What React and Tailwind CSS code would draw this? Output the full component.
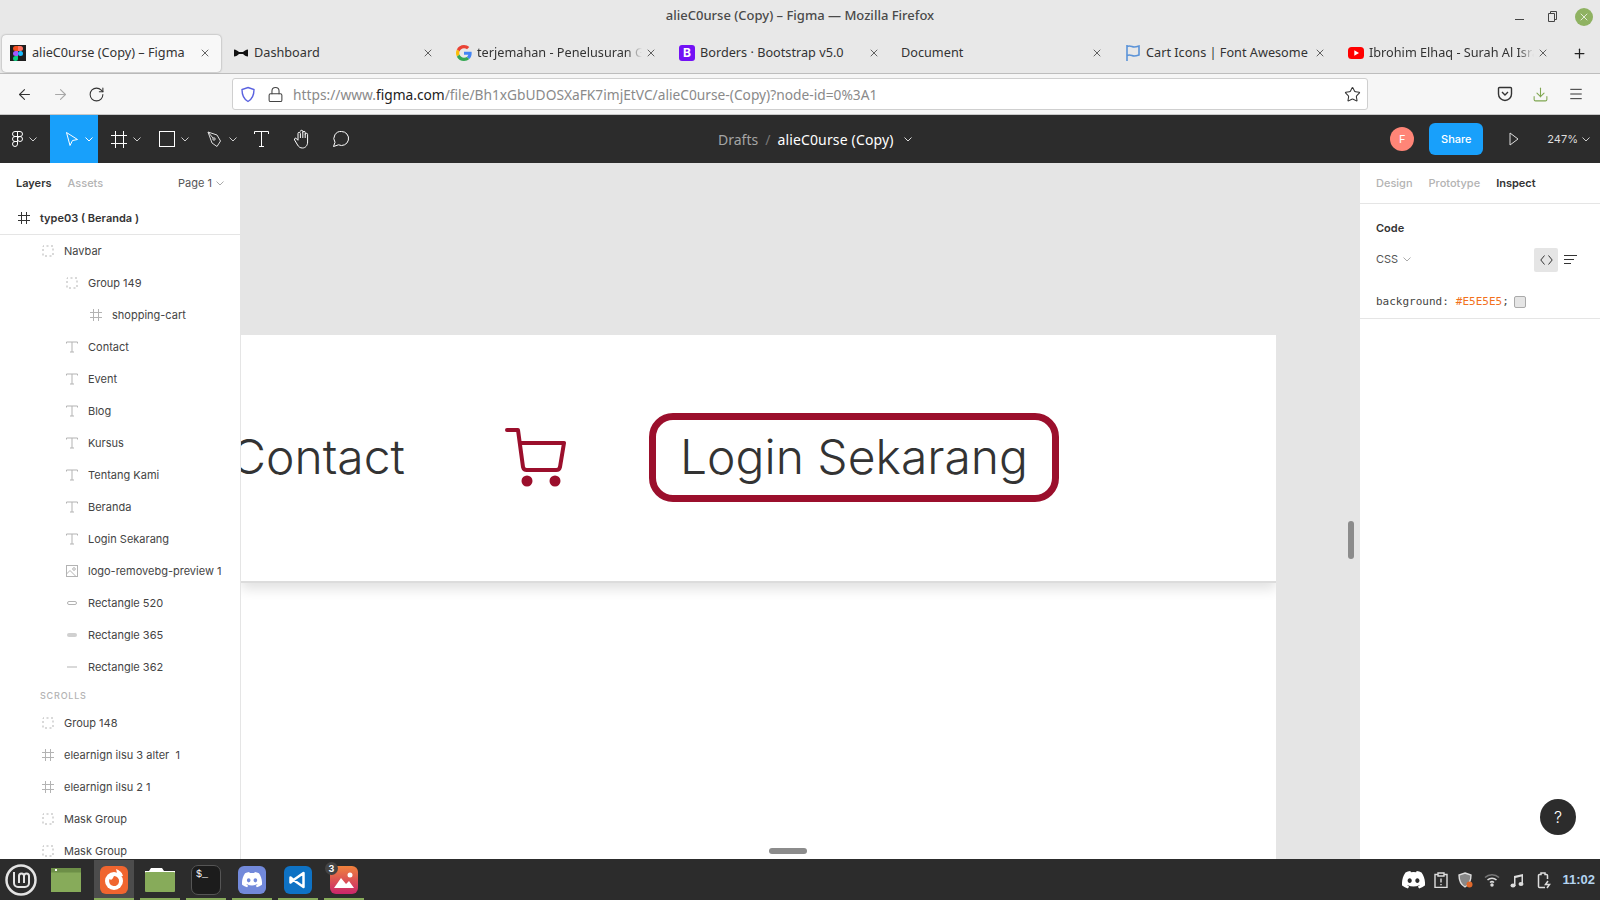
import React from "react";
import { ArrowLeft, ArrowRight, RotateCw, Star, X, Plus, Menu, Lock, Download } from "lucide-react";

const tabs = [
  { title: "Dashboard", icon: "bow" },
  { title: "terjemahan - Penelusuran Google", icon: "google", fade: true },
  { title: "Borders · Bootstrap v5.0", icon: "bootstrap" },
  { title: "Document", icon: null },
  { title: "Cart Icons | Font Awesome", icon: "flag" },
  { title: "Ibrohim Elhaq - Surah Al Israa", icon: "youtube", fade: true },
];

const layers = [
  { name: "Navbar", depth: 1, icon: "group" },
  { name: "Group 149", depth: 2, icon: "group" },
  { name: "shopping-cart", depth: 3, icon: "frame" },
  { name: "Contact", depth: 2, icon: "text" },
  { name: "Event", depth: 2, icon: "text" },
  { name: "Blog", depth: 2, icon: "text" },
  { name: "Kursus", depth: 2, icon: "text" },
  { name: "Tentang Kami", depth: 2, icon: "text" },
  { name: "Beranda", depth: 2, icon: "text" },
  { name: "Login Sekarang", depth: 2, icon: "text" },
  { name: "logo-removebg-preview 1", depth: 2, icon: "image" },
  { name: "Rectangle 520", depth: 2, icon: "pill" },
  { name: "Rectangle 365", depth: 2, icon: "pillFill" },
  { name: "Rectangle 362", depth: 2, icon: "line" },
];

const scrollLayers = [
  { name: "Group 148", depth: 1, icon: "group" },
  { name: "elearnign ilsu 3 alter  1", depth: 1, icon: "frame" },
  { name: "elearnign ilsu 2 1", depth: 1, icon: "frame" },
  { name: "Mask Group", depth: 1, icon: "group" },
  { name: "Mask Group", depth: 1, icon: "group" },
];

const Favicon = ({ type }) => {
  if (type === "bow")
    return (
      <svg width="16" height="16" viewBox="0 0 16 16">
        <path d="M1 4.5c2 0 4 1.5 5 2.5h4c1-1 3-2.5 5-2.5v7c-2 0-4-1.5-5-2.5H6c-1 1-3 2.5-5 2.5z" fill="#111" />
      </svg>
    );
  if (type === "google")
    return (
      <svg width="16" height="16" viewBox="0 0 48 48">
        <path fill="#EA4335" d="M24 9.5c3.5 0 6.7 1.3 9.1 3.5l6.8-6.8C35.8 2.4 30.3 0 24 0 14.6 0 6.5 5.4 2.6 13.2l7.9 6.1C12.4 13.6 17.7 9.5 24 9.5z" />
        <path fill="#4285F4" d="M47 24.5c0-1.6-.1-3.1-.4-4.5H24v9h12.9c-.6 3-2.2 5.4-4.7 7.1l7.6 5.9C44.3 37.8 47 31.7 47 24.5z" />
        <path fill="#FBBC05" d="M10.5 28.7c-.5-1.4-.8-3-.8-4.7s.3-3.2.8-4.7l-7.9-6.1C.9 16.5 0 20.1 0 24s.9 7.5 2.6 10.8z" />
        <path fill="#34A853" d="M24 48c6.5 0 11.9-2.1 15.8-5.8l-7.6-5.9c-2.1 1.4-4.9 2.3-8.2 2.3-6.3 0-11.6-4.1-13.5-9.8l-7.9 6.1C6.5 42.6 14.6 48 24 48z" />
      </svg>
    );
  if (type === "bootstrap")
    return (
      <span className="flex h-4 w-4 items-center justify-center rounded-[3px] bg-[#7311f5] text-[12px] font-bold leading-none text-white">B</span>
    );
  if (type === "flag")
    return (
      <svg width="16" height="18" viewBox="0 0 16 18" fill="none" stroke="#5b93d8" strokeWidth="1.6">
        <path d="M2 1v16" />
        <path d="M2 2.5c3-1.5 5 .5 7 .5 2 0 3.5-.5 5-1v9c-1.5.5-3 1-5 1-2 0-4-2-7-.5" />
      </svg>
    );
  if (type === "youtube")
    return (
      <svg width="16" height="16" viewBox="0 0 16 16">
        <rect x="0" y="2" width="16" height="12" rx="3.5" fill="#f00" />
        <path d="M6.3 5.3v5.4L11 8z" fill="#fff" />
      </svg>
    );
  return null;
};

const FigmaLogo = ({ color = false }) =>
  color ? (
    <svg width="10" height="15" viewBox="0 0 10 15">
      <circle cx="7.5" cy="7.5" r="2.5" fill="#1abcfe" />
      <path d="M2.5 10H5v2.5A2.5 2.5 0 1 1 2.5 10z" fill="#0acf83" />
      <path d="M2.5 5H5v5H2.5a2.5 2.5 0 0 1 0-5z" fill="#a259ff" />
      <path d="M2.5 0H5v5H2.5a2.5 2.5 0 0 1 0-5z" fill="#f24e1e" />
      <path d="M5 0h2.5a2.5 2.5 0 0 1 0 5H5z" fill="#ff7262" />
    </svg>
  ) : (
    <svg width="11" height="16" viewBox="0 0 11 16" fill="none" stroke="#fff" strokeWidth="1">
      <path d="M5.5 .5H3a2.5 2.5 0 0 0 0 5h2.5zM5.5 .5H8a2.5 2.5 0 0 1 0 5H5.5z" />
      <path d="M5.5 5.5H3a2.5 2.5 0 0 0 0 5h2.5z" />
      <circle cx="8" cy="8" r="2.5" />
      <path d="M3 10.5h2.5V13A2.5 2.5 0 1 1 3 10.5z" />
    </svg>
  );

const LayerIcon = ({ type, dark }) => {
  const c = dark ? "#333" : "#b3b3b3";
  if (type === "group")
    return (
      <svg width="12" height="12" viewBox="0 0 12 12" fill="none" stroke={c} strokeWidth="1" strokeDasharray="2 2.5" className="block">
        <rect x="1" y="1" width="10" height="10" strokeDashoffset="1" />
      </svg>
    );
  if (type === "frame")
    return (
      <svg width="14" height="14" viewBox="0 0 14 14" fill="none" stroke={c} strokeWidth="1" className="block">
        <path d="M4.5 1v12M9.5 1v12M1 4.5h12M1 9.5h12" />
      </svg>
    );
  if (type === "text")
    return (
      <svg width="12" height="12" viewBox="0 0 12 12" fill="none" stroke={c} strokeWidth="1" className="block">
        <path d="M.5 2.5V1h11v1.5M6 1v10M4 11h4" />
      </svg>
    );
  if (type === "image")
    return (
      <svg width="12" height="12" viewBox="0 0 12 12" fill="none" stroke={c} strokeWidth="1" className="block">
        <rect x=".5" y=".5" width="11" height="11" />
        <circle cx="8" cy="4" r="1.3" />
        <path d="M.5 9L4 5.5l6 6" />
      </svg>
    );
  if (type === "pill")
    return (
      <svg width="12" height="12" viewBox="0 0 12 12" fill="none" stroke={c} className="block">
        <rect x="1.5" y="4.5" width="9" height="3" rx="1.5" />
      </svg>
    );
  if (type === "pillFill")
    return (
      <svg width="12" height="12" viewBox="0 0 12 12" className="block">
        <rect x="1" y="4" width="10" height="4" rx="2" fill="#d0d0d0" />
      </svg>
    );
  return (
    <svg width="12" height="12" viewBox="0 0 12 12" className="block">
      <rect x="1" y="5.5" width="10" height="1" fill={c} />
    </svg>
  );
};

const LayerRow = ({ item }) => {
  const pad = { 1: "pl-[41px]", 2: "pl-[65px]", 3: "pl-[89px]" }[item.depth];
  return (
    <div className={`flex h-8 shrink-0 items-center ${pad}`}>
      <span className="flex w-[14px] justify-center"><LayerIcon type={item.icon} /></span>
      <span className="ml-[9px] whitespace-pre text-[11px] text-[#444]">{item.name}</span>
    </div>
  );
};

const Chevron = ({ className = "" }) => (
  <svg width="8" height="5" viewBox="0 0 8 5" fill="none" stroke="currentColor" className={className}>
    <path d="M.5 .5L4 4 7.5 .5" />
  </svg>
);

const TitleBar = () => (
  <div className="flex h-[33px] shrink-0 items-center bg-[#e8e8e8]">
    <div className="flex-1 pl-[7px]" />
    <div className="pb-px font-['Noto_Sans'] text-[13px] font-medium text-[#4a4a4a]">alieC0urse (Copy) – Figma — Mozilla Firefox</div>
    <div className="flex flex-1 items-center justify-end pr-[7px]">
      <span className="mr-[22px] mt-[6px] h-px w-[9px] bg-[#444]" />
      <svg width="11" height="11" viewBox="0 0 11 11" fill="none" stroke="#444" className="mr-[18px]">
        <path d="M2.5 2.5h6v8h-6zM4.5 2.5V.5h6v8h-2" />
      </svg>
      <span className="flex h-[18px] w-[18px] items-center justify-center rounded-full bg-[#8fb262]">
        <X size={12} color="#fff" strokeWidth={1.5} />
      </span>
    </div>
  </div>
);

const TabBar = () => (
  <div className="flex h-[41px] shrink-0 items-center border-b border-[#bdbdbd] bg-[#e8e8e8] pl-[2px]">
    <div className="mr-[2px] flex h-[37px] w-[219px] shrink-0 items-center rounded-[4px] bg-[#f8f8f8] pl-[8px] pr-[10px] shadow-[0_0_2px_rgba(0,0,0,0.4)]">
      <span className="flex h-4 w-4 items-center justify-center bg-[#1e1e1e]"><FigmaLogo color /></span>
      <span className="ml-[6px] flex-1 whitespace-nowrap font-['Noto_Sans'] text-[12.7px] text-[#333]">alieC0urse (Copy) – Figma</span>
      <X size={12} color="#333" strokeWidth={1.5} />
    </div>
    {tabs.map((tab) => (
      <div key={tab.title} className="flex h-[37px] w-[223px] shrink-0 items-center pl-[10px] pr-[12px]">
        {tab.icon ? (
          <span className="mr-[5px] flex w-4 shrink-0 items-center justify-center"><Favicon type={tab.icon} /></span>
        ) : (
          <span className="ml-[-1px]" />
        )}
        <span className={`min-w-0 flex-1 overflow-hidden whitespace-nowrap font-['Noto_Sans'] text-[12.7px] text-[#333] ${tab.fade ? "[mask-image:linear-gradient(to_left,transparent,black_16px)]" : ""}`}>{tab.title}</span>
        <X size={12} color="#333" strokeWidth={1.5} className="ml-[3px] shrink-0" />
      </div>
    ))}
    <Plus size={15} color="#222" className="ml-[11px] shrink-0" />
  </div>
);

const NavBar = () => (
  <div className="flex h-[41px] shrink-0 items-center border-b border-[#c8c8c8] bg-[#f6f6f6]">
    <ArrowLeft size={17} color="#333" strokeWidth={1.5} className="ml-[16px]" />
    <ArrowRight size={17} color="#a8a8a8" strokeWidth={1.5} className="ml-[19px]" />
    <RotateCw size={17} color="#333" strokeWidth={1.5} className="ml-[19px]" />
    <div className="ml-[127px] flex h-[32px] w-[1136px] shrink-0 items-center rounded-[3px] border border-[#cfcfcf] bg-white pl-[7px] pr-[6px]">
      <svg width="16" height="17" viewBox="0 0 16 17" fill="none" stroke="#5a62e0" strokeWidth="1.4">
        <path d="M8 1.5l6 2c0 6-1.5 9.5-6 12-4.5-2.5-6-6-6-12z" />
      </svg>
      <Lock size={17} color="#444" strokeWidth={1.5} className="ml-[11px]" />
      <div className="ml-[9px] flex-1 whitespace-nowrap pt-[2px] font-['Noto_Sans'] text-[13.75px] text-[#8a8a8a]">
        https://www.<span className="text-[#222]">figma.com</span>/file/Bh1xGbUDOSXaFK7imjEtVC/alieC0urse-(Copy)?node-id=0%3A1
      </div>
      <Star size={17} color="#333" strokeWidth={1.5} />
    </div>
    <div className="flex-1" />
    <svg width="16" height="16" viewBox="0 0 16 16" fill="none" stroke="#333" strokeWidth="1.4" className="mr-[19px]">
      <path d="M2.5 1.5h11a1 1 0 0 1 1 1V8a6.5 6.5 0 0 1-13 0V2.5a1 1 0 0 1 1-1z" />
      <path d="M5 6l3 3 3-3" />
    </svg>
    <Download size={17} color="#7fa650" strokeWidth={1.5} className="mr-[19px]" />
    <Menu size={16} color="#333" strokeWidth={1.5} className="mr-[16px]" />
  </div>
);

const FigmaToolbar = () => (
  <div className="relative flex h-[48px] shrink-0 items-center bg-[#2c2c2c] text-white">
    <div className="flex w-[50px] items-center pl-[12px]">
      <FigmaLogo />
      <Chevron className="ml-[6px] text-[#ccc]" />
    </div>
    <div className="flex h-full w-[48px] items-center bg-[#18a0fb] pl-[15px]">
      <svg width="14" height="17" viewBox="0 0 14 17" fill="none" stroke="#fff">
        <path d="M1.5 1.5l11 7-5 1-2.5 5z" />
      </svg>
      <Chevron className="ml-[6px]" />
    </div>
    <div className="flex items-center pl-[13px]">
      <svg width="16" height="17" viewBox="0 0 16 17" fill="none" stroke="#fff">
        <path d="M4.5 0v17M12.5 0v17M0 4.5h16M0 12.5h16" />
      </svg>
      <Chevron className="ml-[6px] text-[#ccc]" />
    </div>
    <div className="flex items-center pl-[18px]">
      <span className="h-[16px] w-[16px] border border-white" />
      <Chevron className="ml-[6px] text-[#ccc]" />
    </div>
    <div className="flex items-center pl-[18px]">
      <svg width="16" height="17" viewBox="0 0 16 17" fill="none" stroke="#ddd">
        <path d="M1 1l9 3 3.5 6-3.5 5.5L5 12 1 1zM1 1l5 6" />
        <circle cx="7" cy="8" r="1.2" />
      </svg>
      <Chevron className="ml-[6px] text-[#ccc]" />
    </div>
    <svg width="15" height="16" viewBox="0 0 15 16" fill="none" stroke="#fff" className="ml-[17px]">
      <path d="M.5 3V.5h14V3M7.5 .5v15M5 15.5h5" />
    </svg>
    <svg width="20" height="20" viewBox="0 0 20 20" fill="none" stroke="#fff" className="ml-[23px]">
      <path d="M6 11V4.5a1.2 1.2 0 0 1 2.4 0V9m0-6.5a1.2 1.2 0 0 1 2.4 0V9m0-5.5a1.2 1.2 0 0 1 2.4 0V9m0-3.5a1.2 1.2 0 0 1 2.4 0V13c0 3.5-2.2 6-5 6-2.5 0-3.8-1-5-3l-3-5c-.8-1.5 1-2.5 2-1.3L6 11.5" />
    </svg>
    <svg width="18" height="18" viewBox="0 0 18 18" fill="none" stroke="#fff" className="ml-[20px]">
      <path d="M9.5 1.5a7 7 0 1 1-3 13.3L1.5 16.5 3 12.3A7 7 0 0 1 9.5 1.5z" />
    </svg>
    {/* file name sits in the middle of the bar */}
    <div className="absolute left-[718px] flex items-center font-['Noto_Sans'] text-[14px]">
      <span className="text-[#a5a5a5]">Drafts</span>
      <span className="mx-[7px] text-[#777]">/</span>
      <span className="tracking-[0.15px] text-white">alieC0urse (Copy)</span>
      <Chevron className="ml-[10px] text-[#ddd]" />
    </div>
    <div className="flex-1" />
    <span className="flex h-6 w-6 items-center justify-center rounded-full bg-[#ff8577] text-[11px] text-white">F</span>
    <span className="ml-[15px] flex h-[32px] w-[54px] items-center justify-center rounded-[6px] bg-[#18a0fb] text-[11px] font-medium text-white">Share</span>
    <svg width="10" height="14" viewBox="0 0 10 14" fill="none" stroke="#ddd" className="ml-[26px]">
      <path d="M1 1l8 6-8 6z" />
    </svg>
    <span className="ml-[28px] text-[11px] text-[#ddd]">247%</span>
    <Chevron className="ml-[4px] mr-[10px] text-[#ccc]" />
  </div>
);

const LeftPanel = () => (
  <div className="flex w-[241px] shrink-0 flex-col overflow-hidden border-r border-[#e5e5e5] bg-white">
    <div className="flex h-[40px] shrink-0 items-center pl-[16px] pr-[16px] text-[11px]">
      <span className="font-semibold text-[#333]">Layers</span>
      <span className="ml-[16px] font-medium text-[#b3b3b3]">Assets</span>
      <span className="ml-auto text-[#555]">Page 1</span>
      <Chevron className="ml-[4px] text-[#aaa]" />
    </div>
    <div className="flex h-[32px] shrink-0 items-center border-b border-[#e5e5e5] pb-px pl-[17px]">
      <LayerIcon type="frame" dark />
      <span className="ml-[9px] text-[11px] font-semibold text-[#333]">type03 ( Beranda )</span>
    </div>
    {layers.map((item) => (
      <LayerRow key={item.name} item={item} />
    ))}
    <div className="flex h-[24px] shrink-0 items-center pl-[40px] pt-[2px] text-[9px] font-medium tracking-[0.8px] text-[#b3b3b3]">SCROLLS</div>
    {scrollLayers.map((item, i) => (
      <LayerRow key={i} item={item} />
    ))}
  </div>
);

const Canvas = () => (
  <div className="relative flex min-w-0 flex-1 flex-col overflow-hidden bg-[#e5e5e5]">
    <div className="h-[172px] shrink-0" />
    <div className="flex w-[1035px] flex-1 flex-col overflow-hidden bg-white">
      <div className="flex h-[248px] shrink-0 items-center overflow-hidden border-b-2 border-[#dcdcdc] pb-[2px] shadow-[0_6px_12px_rgba(0,0,0,0.12)]">
        <span className="ml-[-10px] w-[183px] shrink-0 whitespace-nowrap text-[48px] font-light leading-none text-[#333]">Contact</span>
        <svg width="62" height="60" viewBox="0 0 62 60" fill="none" stroke="#9b0f2c" strokeWidth="4" strokeLinecap="round" strokeLinejoin="round" className="ml-[91px] shrink-0">
          <path d="M2 3h11l5 37a4 4 0 0 0 4 3h29a4 4 0 0 0 4-3l4-24H15" />
          <circle cx="22" cy="54" r="3.5" fill="#9b0f2c" />
          <circle cx="50" cy="54" r="3.5" fill="#9b0f2c" />
        </svg>
        <span className="ml-[82px] flex h-[89px] w-[410px] shrink-0 items-center justify-center rounded-[24px] border-[7px] border-[#9b0f2c] text-[48px] font-light text-[#333]">Login Sekarang</span>
      </div>
    </div>
    {/* canvas scrollbars */}
    <span className="absolute right-[6px] top-[358px] h-[38px] w-[6px] rounded-full bg-[#8c8c8c]" />
    <span className="absolute bottom-[5px] left-[528px] h-[6px] w-[38px] rounded-full bg-[#8c8c8c]" />
  </div>
);

const RightPanel = () => (
  <div className="relative flex w-[240px] shrink-0 flex-col bg-white">
    <div className="flex h-[41px] shrink-0 items-center gap-[16px] border-b border-[#e5e5e5] pl-[16px] text-[11px] font-medium text-[#b3b3b3]">
      <span>Design</span>
      <span>Prototype</span>
      <span className="font-semibold text-[#333]">Inspect</span>
    </div>
    <div className="flex h-[115px] shrink-0 flex-col border-b border-[#e5e5e5] pl-[16px]">
      <div className="mt-[16px] text-[11px] font-semibold text-[#333]">Code</div>
      <div className="mt-[11px] flex h-6 items-center pr-[22px]">
        <span className="text-[11px] text-[#555]">CSS</span>
        <Chevron className="ml-[5px] text-[#aaa]" />
        <span className="ml-auto flex h-6 w-6 items-center justify-center rounded-[2px] bg-[#e5e5e5]">
          <svg width="13" height="10" viewBox="0 0 13 10" fill="none" stroke="#333">
            <path d="M4.5 .5L.8 5l3.7 4.5M8.5 .5L12.2 5 8.5 9.5" />
          </svg>
        </span>
        <svg width="13" height="10" viewBox="0 0 13 10" stroke="#333" className="ml-[6px] mr-[1px]">
          <path d="M0 .5h13M0 4.5h10M0 8.5h7" />
        </svg>
      </div>
      <div className="mt-[22px] flex items-center font-['DejaVu_Sans_Mono'] text-[11px] text-[#444]">
        background: <span className="ml-[7px] text-[#f2711c]">#E5E5E5</span>;
        <span className="ml-[5px] h-[12px] w-[12px] rounded-[2px] border border-[#aaa] bg-[#e5e5e5]" />
      </div>
    </div>
    <span className="absolute bottom-[24px] right-[24px] flex h-9 w-9 items-center justify-center rounded-full bg-[#2c2c2c] text-[16px] font-light text-white">?</span>
  </div>
);

const AppIcon = ({ active, children }) => (
  <div className={`relative ml-[6px] flex h-full w-[40px] shrink-0 items-center justify-center ${active ? "bg-[#4c4c4c]" : ""}`}>
    {children}
    <span className="absolute bottom-0 left-0 h-[2px] w-full bg-[#87ab5a]" />
  </div>
);

const DiscordGlyph = ({ size }) => (
  <svg width={size} height={size * 0.76} viewBox="0 0 127 96" fill="#fff">
    <path d="M107.7 8.1A105 105 0 0 0 81.5 0a72 72 0 0 0-3.4 6.8 97.7 97.7 0 0 0-29.1 0A72 72 0 0 0 45.6 0a105.9 105.9 0 0 0-26.3 8.1C2.7 32.7-1.8 56.6.4 80.2A105.7 105.7 0 0 0 32.6 96.5a77.7 77.7 0 0 0 6.9-11.1 68.4 68.4 0 0 1-10.8-5.2c.9-.7 1.8-1.3 2.7-2a75.6 75.6 0 0 0 64.3 0c.9.7 1.8 1.4 2.7 2a68.7 68.7 0 0 1-10.9 5.2 77 77 0 0 0 6.9 11.1 105.3 105.3 0 0 0 32.2-16.2c2.6-27.5-4.5-51.2-18.9-72.1zM42.5 65.7c-6.3 0-11.5-5.7-11.5-12.8S36 40 42.5 40s11.6 5.8 11.5 12.9-5.1 12.8-11.5 12.8zm42.4 0c-6.3 0-11.5-5.7-11.5-12.8S78.4 40 84.9 40s11.6 5.8 11.5 12.9-5.1 12.8-11.5 12.8z" />
  </svg>
);

const Taskbar = () => (
  <div className="flex h-[41px] shrink-0 items-center bg-[#2c2c2c] pt-px">
    <svg width="34" height="34" viewBox="0 0 34 34" fill="none" stroke="#e4e4e4" className="ml-[4px] shrink-0">
      <circle cx="17" cy="17" r="14.5" strokeWidth="2.5" />
      <path d="M10 9v11a4 4 0 0 0 4 4h7a4 4 0 0 0 4-4v-7a2.5 2.5 0 0 0-5 0v7m0-7a2.5 2.5 0 0 0-5 0v7" strokeWidth="2" />
    </svg>
    <div className="ml-[10px] flex h-full w-[40px] shrink-0 items-center justify-center pr-[4px]">
      <svg width="30" height="24" viewBox="0 0 30 24" className="shrink-0">
        <rect width="30" height="24" fill="#87ab5a" />
        <rect width="30" height="4.5" fill="#6d8f47" />
        <rect x="4" y="1" width="2" height="2" fill="#fff" />
      </svg>
    </div>
    <AppIcon active>
      <svg width="28" height="28" viewBox="0 0 28 28">
        <rect width="28" height="28" rx="6" fill="#f0652f" />
        <circle cx="14" cy="15" r="9" fill="#fff" />
        <path d="M14 10a5 5 0 1 1-4.5 3c2 2 3 0 4.5-3z" fill="#f0652f" />
        <path d="M16 3c3 1 6 3 7 7l-5 1z" fill="#fff" />
      </svg>
    </AppIcon>
    <AppIcon>
      <svg width="30" height="24" viewBox="0 0 30 24">
        <path d="M4 3l2-3h11l2 3h11v4H0V3z" fill="#fff" />
        <rect y="4" width="30" height="20" rx="1" fill="#87ab5a" />
      </svg>
    </AppIcon>
    <AppIcon>
      <span className="flex h-[30px] w-[30px] items-start rounded-[7px] border border-[#555] bg-[#1c1c1c] pl-[4px] pt-[3px] font-['Liberation_Mono'] text-[10px] leading-[12px] text-white">$_</span>
    </AppIcon>
    <AppIcon>
      <span className="flex h-7 w-7 items-center justify-center rounded-[6px] bg-[#7289da]">
        <DiscordGlyph size={20} />
      </span>
    </AppIcon>
    <AppIcon>
      <span className="flex h-7 w-7 items-center justify-center rounded-[6px] bg-[#0e72c4]">
        <svg width="18" height="18" viewBox="0 0 18 18" fill="none" stroke="#fff" strokeWidth="2.5" strokeLinejoin="round">
          <path d="M14.5 2v14L4.5 9l-3 2.5v-5L4.5 9z" />
        </svg>
      </span>
    </AppIcon>
    <AppIcon>
      <svg width="28" height="28" viewBox="0 0 28 28">
        <defs>
          <linearGradient id="pic" x1="0" y1="0" x2="0" y2="1">
            <stop offset="0" stopColor="#f0823c" />
            <stop offset="1" stopColor="#c9256b" />
          </linearGradient>
        </defs>
        <rect width="28" height="28" rx="6" fill="url(#pic)" />
        <circle cx="20" cy="9" r="2.5" fill="#fff" />
        <path d="M4 22l7-10 5 6 3-3 5 7z" fill="#fff" />
      </svg>
      <span className="absolute left-[1px] top-[2px] flex h-[13px] w-[13px] items-center justify-center rounded-full bg-[#444] text-[9px] font-bold leading-none text-white">3</span>
    </AppIcon>
    <div className="flex-1" />
    <DiscordGlyph size={23} />
    <svg width="14" height="16" viewBox="0 0 14 16" fill="none" stroke="#ddd" strokeWidth="1.4" className="ml-[9px]">
      <path d="M4 2.5H1v13h12v-13h-3M4 1h6v3H4zM7 6.5v4M7 12v1.2" />
    </svg>
    <svg width="17" height="17" viewBox="0 0 17 17" className="ml-[9px]">
      <path d="M8 1l6 2c0 6-1.5 9.5-6 12-4.5-2.5-6-6-6-12z" fill="#888" stroke="#ddd" strokeWidth="1.4" />
      <circle cx="12.5" cy="12.5" r="3" fill="#e0682b" />
    </svg>
    <svg width="16" height="14" viewBox="0 0 16 14" fill="none" stroke="#ddd" strokeWidth="1.5" className="ml-[10px]">
      <path d="M1 4.5a10 10 0 0 1 14 0" stroke="#777" />
      <path d="M3.5 7a6.5 6.5 0 0 1 9 0M6 9.5a3 3 0 0 1 4 0" />
      <circle cx="8" cy="12" r="1" fill="#ddd" />
    </svg>
    <svg width="14" height="15" viewBox="0 0 14 15" className="ml-[10px]" fill="#ddd">
      <path d="M4 3l9-2v10h-1.5V3.5L5.5 5v8H4z" />
      <ellipse cx="3" cy="12.5" rx="2.5" ry="2" />
      <ellipse cx="11" cy="11" rx="2.5" ry="2" />
    </svg>
    <svg width="14" height="17" viewBox="0 0 14 17" fill="none" stroke="#ddd" strokeWidth="1.5" className="ml-[13px]">
      <path d="M8 15.5H2.5a1 1 0 0 1-1-1v-11a1 1 0 0 1 1-1H4V1h4v1.5h1.500a1 1 0 0 1 1 1V7" />
      <path d="M11 9l-2.500 3.500h4L10 16" />
    </svg>
    <span className="ml-[11px] mr-[5px] font-['Liberation_Sans'] text-[13px] font-bold text-[#b4d4f0]">11:02</span>
  </div>
);

export default function App() {
  return (
    <div className="flex h-[900px] w-[1600px] flex-col overflow-hidden bg-white font-['Inter',sans-serif]">
      <TitleBar />
      <TabBar />
      <NavBar />
      <FigmaToolbar />
      <div className="flex min-h-0 flex-1">
        <LeftPanel />
        <Canvas />
        <RightPanel />
      </div>
      <Taskbar />
    </div>
  );
}
